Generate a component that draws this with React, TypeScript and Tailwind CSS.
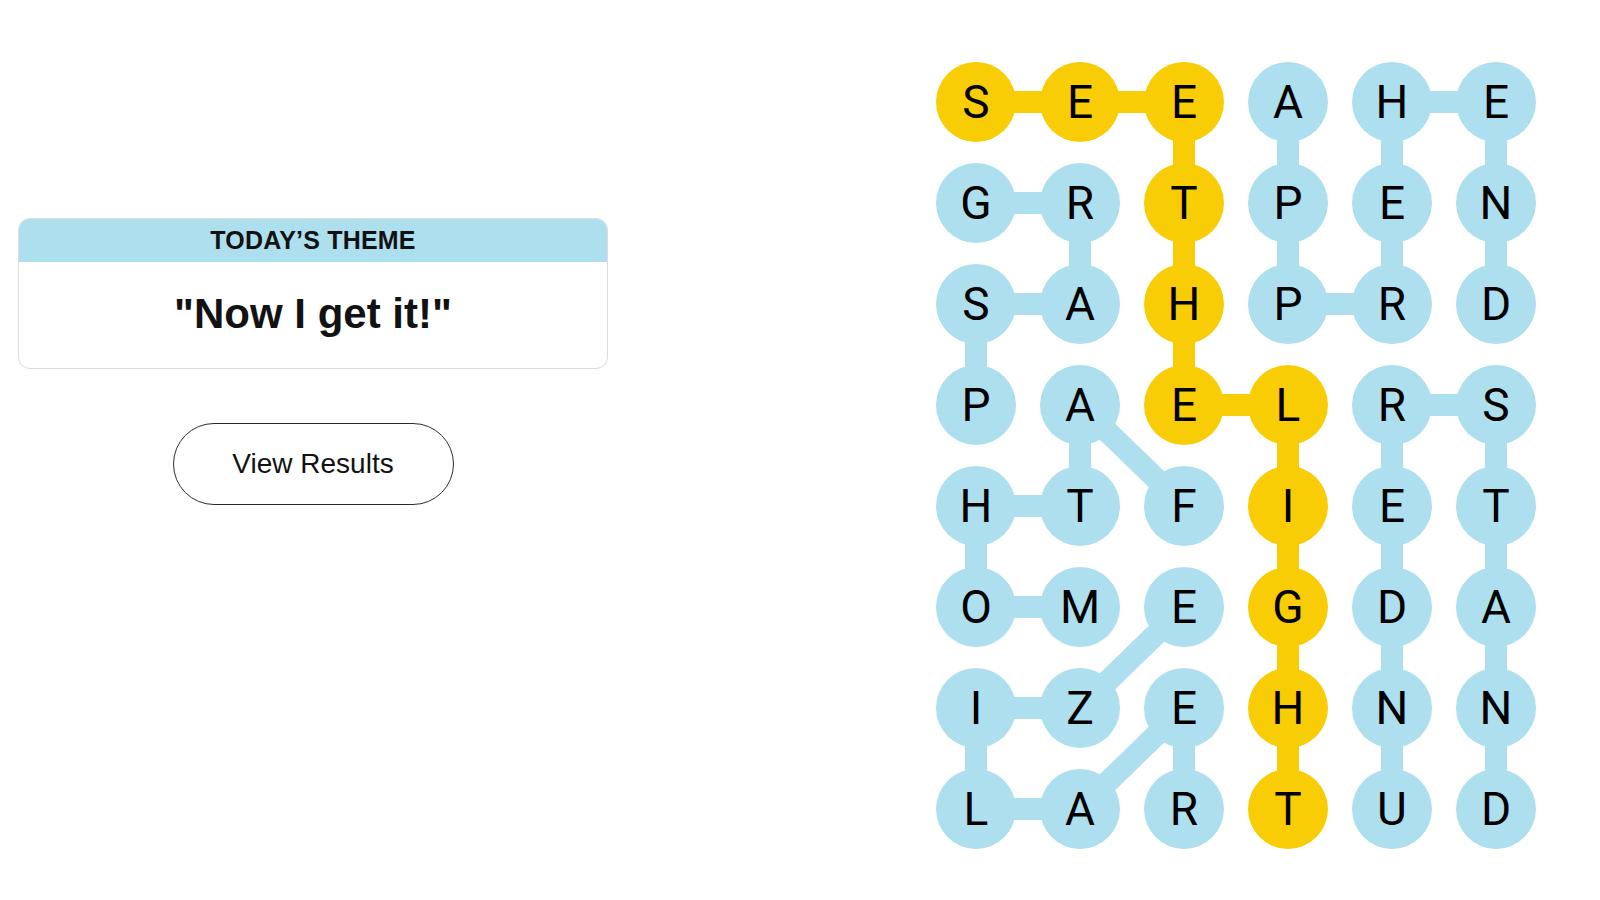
import React from 'react'

const rows = [
  'SEEAHE',
  'GRTPEN',
  'SAHPRD',
  'PAELRS',
  'HTFIET',
  'OMEGDA',
  'IZEHNN',
  'LARTUD',
]

// cells of "SEE THE LIGHT"
const yellowPath: [number, number][] = [
  [0, 0], [0, 1], [0, 2], [1, 2], [2, 2], [3, 2], [3, 3], [4, 3], [5, 3], [6, 3], [7, 3],
]

const bluePaths: [number, number][][] = [
  // APPREHEND
  [[0, 3], [1, 3], [2, 3], [2, 4], [1, 4], [0, 4], [0, 5], [1, 5], [2, 5]],
  // GRASP
  [[1, 0], [1, 1], [2, 1], [2, 0], [3, 0]],
  // FATHOM
  [[4, 2], [3, 1], [4, 1], [4, 0], [5, 0], [5, 1]],
  // REALIZE
  [[7, 2], [6, 2], [7, 1], [7, 0], [6, 0], [6, 1], [5, 2]],
  // UNDERSTAND
  [[7, 4], [6, 4], [5, 4], [4, 4], [3, 4], [3, 5], [4, 5], [5, 5], [6, 5], [7, 5]],
]

const BLUE = '#aedfee'
const YELLOW = '#f8cd05'
const CELL = 80
const GAP_X = 24
const GAP_Y = 21

const cx = (c: number) => CELL / 2 + c * (CELL + GAP_X)
const cy = (r: number) => CELL / 2 + r * (CELL + GAP_Y)

const isYellow = (r: number, c: number) =>
  yellowPath.some(([yr, yc]) => yr === r && yc === c)

function Connectors() {
  const w = 6 * CELL + 5 * GAP_X
  const h = 8 * CELL + 7 * GAP_Y
  const lines = (path: [number, number][], color: string) =>
    path.slice(1).map(([r, c], i) => {
      const [pr, pc] = path[i]
      return (
        <line
          key={`${color}-${r}-${c}`}
          x1={cx(pc)}
          y1={cy(pr)}
          x2={cx(c)}
          y2={cy(r)}
          stroke={color}
          strokeWidth={22}
        />
      )
    })

  return (
    <svg
      className="absolute inset-0"
      width={w}
      height={h}
      viewBox={`0 0 ${w} ${h}`}
    >
      {bluePaths.map((p) => lines(p, BLUE))}
      {lines(yellowPath, YELLOW)}
    </svg>
  )
}

export default function App() {
  return (
    <div
      className="flex h-[900px] w-[1600px] justify-between bg-white pl-[18px] pr-[64px] pt-[62px] text-[#121212]"
      style={{ fontFamily: '"Liberation Sans", Arial, sans-serif' }}
    >
      <div className="mt-[156px] flex w-[590px] flex-col items-center">
        <div className="w-full overflow-hidden rounded-xl border border-[#dcdcdc]">
          <div className="flex h-[43px] items-center justify-center bg-[#aedfee] text-[25px] font-semibold tracking-[0.2px]">
            TODAY’S THEME
          </div>
          <div className="flex h-[106px] items-center justify-center pb-[4px] text-[42px] font-bold">
            "Now I get it!"
          </div>
        </div>
        <button className="mt-[54px] flex h-[82px] w-[281px] items-center justify-center rounded-full border-[1.5px] border-[#2b2b2b] bg-white text-[28px]">
          View Results
        </button>
      </div>

      <div className="relative h-fit">
        <Connectors />
        <div
          className="relative grid grid-cols-[repeat(6,80px)] gap-x-[24px] gap-y-[21px]"
          style={{ fontFamily: 'Roboto, "Liberation Sans", sans-serif' }}
        >
          {rows.map((row, r) =>
            row.split('').map((ch, c) => (
              <div
                key={`${r}-${c}`}
                className={`flex h-20 w-20 items-center justify-center rounded-full text-[46px] leading-none text-black ${
                  isYellow(r, c) ? 'bg-[#f8cd05]' : 'bg-[#aedfee]'
                }`}
              >
                {ch}
              </div>
            ))
          )}
        </div>
      </div>
    </div>
  )
}
